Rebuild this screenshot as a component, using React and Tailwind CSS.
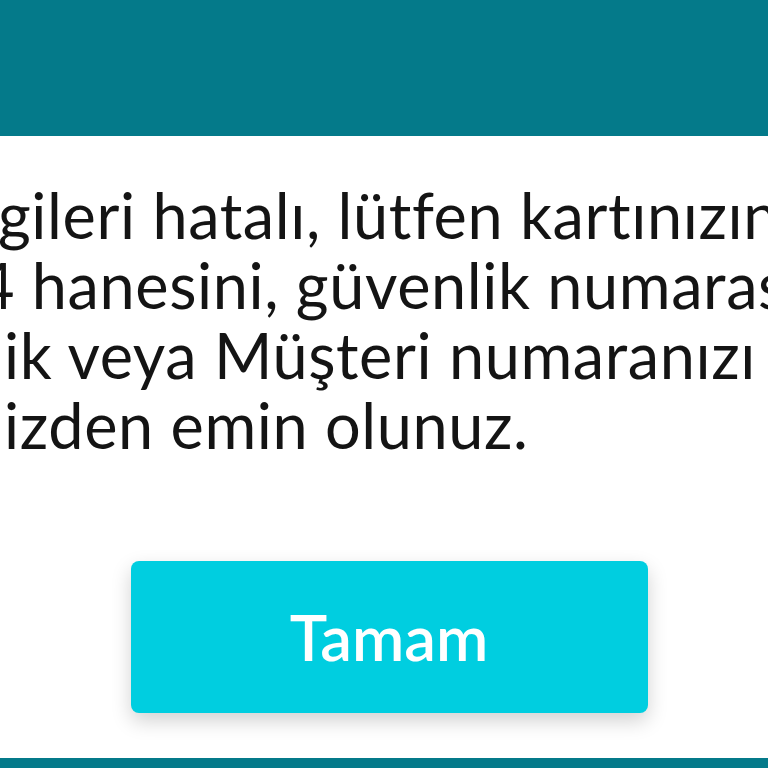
import React from 'react';

const lines = [
  { hidden: 'Kart bil', shown: 'gileri hatalı, lütfen kartınızın son', offset: 'ml-[-2px]' },
  { hidden: 'son ', shown: '4 hanesini, güvenlik numarasını, TC', offset: 'ml-[-22px]' },
  { hidden: 'TC Kiml', shown: 'ik veya Müşteri numaranızı doğru', offset: 'ml-[4px]' },
  { hidden: 'girdiğin', shown: 'izden emin olunuz.', offset: 'ml-[4px]' },
];

const ErrorDialog = () => {
  return (
    <div className="w-[768px] h-[768px] overflow-hidden bg-white flex flex-col font-['Lato',sans-serif] [font-variant-ligatures:none]">
      <div className="h-[136px] shrink-0 bg-[#047a8a]" />

      <div className="flex-1 flex flex-col overflow-hidden">
        <div className="pt-[44px] text-[63px] leading-[70px] tracking-[0.6px] text-[#141414]">
          {lines.map((line) => (
            <div key={line.shown} className={`flex whitespace-nowrap ${line.offset}`}>
              <span className="w-0 flex justify-end">{line.hidden}</span>
              <span>{line.shown}</span>
            </div>
          ))}
        </div>

        <div className="flex justify-center pt-[101px] pl-[10px]">
          <button className="w-[517px] h-[152px] rounded-lg bg-[#00cee0] text-white text-[63px] font-semibold shadow-[0_8px_20px_rgba(0,0,0,0.18)]">
            Tamam
          </button>
        </div>
      </div>

      <div className="h-[10px] shrink-0 bg-[#047a8a]" />
    </div>
  );
};

export default function App() {
  return <ErrorDialog />;
}
